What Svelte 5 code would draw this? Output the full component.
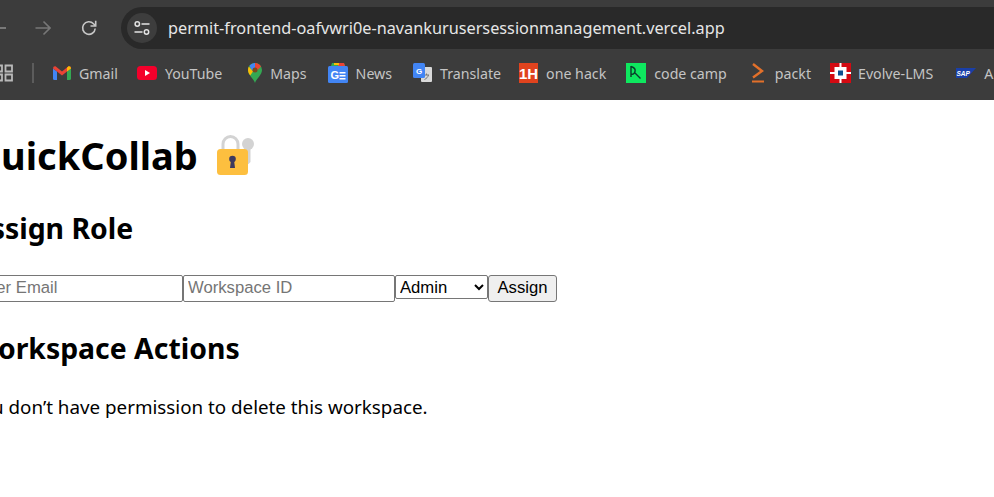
<script>
  let role = 'Admin';
</script>

<div class="chrome">
  <div class="toolbar">
    <svg class="nav back" width="10" height="16" viewBox="0 0 10 16"><path d="M-4 8h10" stroke="#8a8a8a" stroke-width="1.6" fill="none"/></svg>
    <svg class="nav forward" width="16" height="16" viewBox="0 0 16 16"><path d="M0.500 8h14M8.500 1.500 15 8l-6.500 6.500" stroke="#777" stroke-width="1.600" fill="none"/></svg>
    <svg class="nav reload" width="18" height="18" viewBox="0 0 18 18"><path d="M15.200 9.500a6.300 6.300 0 1 1-1.700-4.800L15.500 6.700M15.700 1.800v5.200h-5.200" stroke="#c7c7c7" stroke-width="1.600" fill="none"/></svg>
    <div class="omnibox">
      <span class="tune">
        <svg width="16" height="14" viewBox="0 0 16 14"><circle cx="3.300" cy="3" r="2.200" fill="none" stroke="#e3e3e3" stroke-width="1.500"/><path d="M7.500 3h8M0.500 11h8" stroke="#e3e3e3" stroke-width="1.500"/><circle cx="12.500" cy="11" r="2.200" fill="none" stroke="#e3e3e3" stroke-width="1.500"/></svg>
      </span>
      <span class="url">permit-frontend-oafvwri0e-navankurusersessionmanagement.vercel.app</span>
    </div>
  </div>

  <div class="bookmarks">
    <svg class="apps" width="13" height="18" viewBox="0 0 13 18"><path d="M-5 1.500h7v6h-7zM5.500 1.500h6.500v6H5.500zM-5 10.500h7v6h-7zM5.500 10.500h6.500v6H5.500z" fill="none" stroke="#b9b9b9" stroke-width="1.800"/></svg>
    <span class="divider"></span>

    <span class="mark gmail">
      <svg width="18" height="14" viewBox="0 0 18 14"><path d="M0 2.500V12.500q0 1.500 1.500 1.500H4V5.500z" fill="#4285f4"/><path d="M18 2.500V12.500q0 1.500-1.500 1.500H14V5.500z" fill="#34a853"/><path d="M0 2.500 Q0 0 2.500 0.300L9 5.500 15.500 0.300Q18 0 18 2.500L14 5.500 9 9.500 4 5.500z" fill="#ea4335"/><path d="M14 1.800 15.500 0.300Q18 0 18 2.500L14 5.500z" fill="#fbbc04"/></svg>
      Gmail
    </span>
    <span class="mark">
      <svg width="20" height="14" viewBox="0 0 20 14"><rect width="20" height="14" rx="3.500" fill="#f4002b"/><path d="M8 4v6l5-3z" fill="#fff"/></svg>
      YouTube
    </span>
    <span class="mark maps">
      <svg width="14" height="20" viewBox="0 0 14 20"><path d="M7 20C5.500 15.500 0 12 0 7a7 7 0 0 1 14 0c0 5-5.500 8.500-7 13z" fill="#34a853"/><path d="M1.500 2.500A7 7 0 0 1 7 0L7 4.500 3.800 8z" fill="#4285f4"/><path d="M7 0a7 7 0 0 1 6 3.500L9.500 7 7 4.500z" fill="#ea4335"/><path d="M0.800 3.500Q0 5 0 7c0 2 1 4 2.200 5.500L5 8.500z" fill="#fbbc04"/><circle cx="7" cy="7" r="2.500" fill="#7a4a1f"/></svg>
      Maps
    </span>
    <span class="mark">
      <svg width="20" height="20" viewBox="0 0 20 20"><path d="M3 3 4 0h12l1 3z" fill="#34a853"/><path d="M10 0h6l1 3h-7z" fill="#ea4335"/><path d="M6 0h5v2H6z" fill="#fbbc04"/><rect y="3" width="20" height="17" rx="1.500" fill="#4285f4"/><text class="news-g" x="2.500" y="16">G</text><path d="M11.500 9h6v1.600h-6zM11.500 12h6v1.600h-6zM11.500 15h6v1.600h-6z" fill="#fff"/></svg>
      News
    </span>
    <span class="mark translate">
      <svg width="19" height="20" viewBox="0 0 19 20"><rect x="8" y="4" width="11" height="15" rx="1" fill="#d9d9d9"/><path d="M11 12h5M13.500 10.500v1.500M15.500 12c-.5 2-2 3.500-4 4.500" stroke="#777" fill="none"/><rect width="12" height="15" rx="1.500" fill="#4285f4"/><text class="tr-g" x="3" y="11">G</text></svg>
      Translate
    </span>
    <span class="mark onehack">
      <svg width="19" height="20" viewBox="0 0 19 20"><rect width="19" height="20" fill="#e0431e"/><text class="one-h" x="0" y="15.500">1H</text></svg>
      one hack
    </span>
    <span class="mark">
      <svg width="20" height="20" viewBox="0 0 20 20"><rect width="20" height="20" fill="#0ee85f"/><path d="M5 3v11M5 3.500q5 1.500 4 5T5 11M8.500 9.500l6 6" stroke="#0a3b2a" stroke-width="1.400" fill="none"/></svg>
      code camp
    </span>
    <span class="mark packt">
      <svg width="12" height="20" viewBox="0 0 12 20"><path d="M1 1 10 8 1 14.500" stroke="#e2702a" stroke-width="2.400" fill="none"/><path d="M0 18.500h12" stroke="#e2702a" stroke-width="2"/></svg>
      packt
    </span>
    <span class="mark evolve">
      <svg width="21" height="20" viewBox="0 0 21 20"><rect width="21" height="20" fill="#d40a12"/><path d="M10.500 0v20M0 10h21" stroke="#fff" stroke-width="2"/><rect x="4.500" y="4" width="12" height="12" fill="#fff"/><rect x="8" y="7.500" width="5" height="5" fill="#0c4f8e"/></svg>
      Evolve-LMS
    </span>
    <span class="mark">
      <svg width="20" height="10" viewBox="0 0 20 10"><path d="M0 0h20L11 10H0z" fill="#1a3fa8"/><text class="sap" x="0.500" y="7.500">SAP</text></svg>
      A
    </span>
  </div>
</div>

<main>
  <h1>QuickCollab
    <svg class="lock" width="40" height="40" viewBox="0 0 40 40" role="img" aria-label="lock"><path d="M8 15V9a7.500 7.500 0 0 1 15 0v6" fill="none" stroke="#d3d3d3" stroke-width="3"/><circle cx="33" cy="9" r="6" fill="#d3d3d3"/><path d="M30.500 12h5v15q-2 3-5 3z" fill="#d3d3d3"/><rect x="2" y="14" width="31" height="26" rx="3.500" fill="#fdbf3f"/><circle cx="17.500" cy="24" r="3.300" fill="#3e3a5e"/><path d="M16 25h3l1 8h-5z" fill="#3e3a5e"/></svg>
  </h1>

  <h2>Assign Role</h2>
  <div class="form">
    <input placeholder="User Email" />
    <input placeholder="Workspace ID" />
    <select bind:value={role}>
      <option>Admin</option>
      <option>Editor</option>
      <option>Viewer</option>
    </select>
    <button>Assign</button>
  </div>

  <h2 class="actions">Workspace Actions</h2>
  <p>You don’t have permission to delete this workspace.</p>
</main>

<style>
  :global(body) {
    background: #fff;
    overflow: hidden;
  }
  .chrome {
    background: #3c3c3c;
    height: 100px;
    overflow: hidden;
  }
  .toolbar {
    display: flex;
    align-items: center;
    height: 50px;
    padding: 7px 0 1px;
    box-sizing: border-box;
  }
  .nav {
    flex: none;
  }
  .back {
    margin-right: 25px;
  }
  .forward {
    margin-right: 29px;
  }
  .reload {
    margin-right: 23px;
  }
  .omnibox {
    flex: 1;
    display: flex;
    align-items: center;
    height: 42px;
    background: #292929;
    border-radius: 21px 0 0 21px;
    padding-left: 6px;
  }
  .tune {
    display: flex;
    align-items: center;
    justify-content: center;
    width: 30px;
    height: 30px;
    border-radius: 50%;
    background: #3d3d3d;
    margin-right: 11px;
  }
  .url {
    font: 16.25px "Noto Sans", sans-serif;
    color: #e6e6e6;
    white-space: nowrap;
  }
  .bookmarks {
    display: flex;
    align-items: center;
    height: 46px;
    white-space: nowrap;
    font: 14.2px "Noto Sans", sans-serif;
    color: #c4c4c4;
  }
  .apps {
    flex: none;
  }
  .divider {
    flex: none;
    width: 2px;
    height: 20px;
    background: #5c5c5c;
    margin: 0 19px;
  }
  .mark {
    display: flex;
    flex: none;
    align-items: center;
    gap: 8px;
    margin-right: 21px;
  }
  .gmail {
    margin-right: 19px;
  }
  .maps {
    margin-left: 5px;
  }
  .translate {
    margin-right: 18px;
  }
  .onehack {
    margin-right: 20px;
  }
  .packt {
    gap: 11px;
    margin-left: 4px;
    margin-right: 19px;
  }
  .evolve {
    gap: 7px;
    margin-right: 23px;
  }
  .news-g {
    font: bold 11px "Liberation Sans", sans-serif;
    fill: #fff;
  }
  .tr-g {
    font: bold 8px "Liberation Sans", sans-serif;
    fill: #fff;
  }
  .one-h {
    font: bold 15px "Liberation Sans", sans-serif;
    fill: #fff;
  }
  .sap {
    font: italic bold 6.5px "Liberation Sans", sans-serif;
    fill: #fff;
  }
  main {
    margin-left: -29px;
    font-family: "Noto Sans", sans-serif;
    color: #000;
  }
  h1 {
    display: flex;
    align-items: center;
    gap: 0.5em;
    margin: 0;
    padding-top: 28px;
    font-size: 38px;
    line-height: 54px;
  }
  .lock {
    margin-left: -2px;
    flex: none;
  }
  h2 {
    margin: 0;
    padding-top: 27px;
    font-size: 28.4px;
    line-height: 38px;
  }
  .form {
    display: flex;
    align-items: flex-start;
    margin-top: 28px;
  }
  input {
    width: 212px;
    height: 27px;
    box-sizing: border-box;
    font: 16.67px "Liberation Sans", sans-serif;
    padding: 0 4px 2px;
    border: 1px solid #767676;
    border-radius: 2px;
  }
  input::placeholder {
    color: #757575;
  }
  select {
    width: 93px;
    height: 24px;
    font: 16.67px "Liberation Sans", sans-serif;
    border: 1px solid #767676;
    border-radius: 2px;
    background: #fff;
    color: #000;
  }
  button {
    width: 69px;
    height: 27px;
    font: 16.67px "Liberation Sans", sans-serif;
    border: 1px solid #767676;
    border-radius: 3px;
    background: #efefef;
    color: #000;
    padding: 0 0 2px;
  }
  .actions {
    padding-top: 27px;
  }
  p {
    margin: 27px 0 0;
    font-size: 18.8px;
    line-height: 26px;
  }
</style>
